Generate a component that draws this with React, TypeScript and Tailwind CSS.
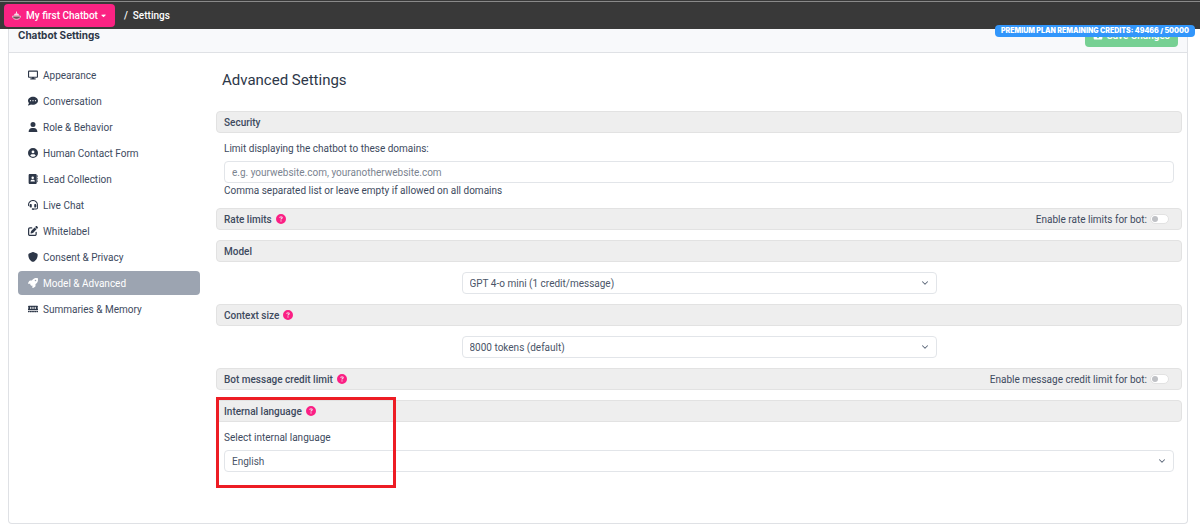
import { useState } from "react";
import type { ReactNode } from "react";
import {
  FaAddressBook,
  FaCaretDown,
  FaCircleQuestion,
  FaCircleUser,
  FaCommentDots,
  FaDisplay,
  FaFloppyDisk,
  FaHeadset,
  FaMemory,
  FaPenToSquare,
  FaRocket,
  FaShield,
  FaUser,
} from "react-icons/fa6";
import { ChevronDown } from "lucide-react";

const navItems = [
  { label: "Appearance", icon: FaDisplay },
  { label: "Conversation", icon: FaCommentDots },
  { label: "Role & Behavior", icon: FaUser },
  { label: "Human Contact Form", icon: FaCircleUser },
  { label: "Lead Collection", icon: FaAddressBook },
  { label: "Live Chat", icon: FaHeadset },
  { label: "Whitelabel", icon: FaPenToSquare },
  { label: "Consent & Privacy", icon: FaShield },
  { label: "Model & Advanced", icon: FaRocket },
  { label: "Summaries & Memory", icon: FaMemory },
];

const BotLogo = () => (
  <svg viewBox="0 0 16 16" className="size-[9px]" fill="none" aria-hidden="true">
    <path d="M8 1v4" stroke="#f6dbe4" strokeWidth="1.8" />
    <path d="M3.500 8C3.500 5.500 5.500 4 8 4S12.500 5.500 12.500 8z" fill="#f6dbe4" />
    <path d="M1 9h14c0 3.800-3 5.800-7 5.800S1 12.800 1 9z" fill="#74505c" stroke="#f6dbe4" strokeWidth="1.5" />
  </svg>
);

const SectionBar = ({ title, help, children }: { title: string; help?: boolean; children?: ReactNode }) => (
  <div className="flex h-[22px] items-center justify-between rounded border border-[#e2e2e2] bg-[#eeeeee] pl-[7px] pr-3">
    <h3 className="flex items-center gap-1 font-medium text-[#3d4a5e]">
      {title}
      {help && (
        <button type="button" aria-label={`About ${title}`}>
          <FaCircleQuestion className="size-[10px] text-[#fb1f84]" />
        </button>
      )}
    </h3>
    {children}
  </div>
);

const Toggle = ({ label }: { label: string }) => {
  const [on, setOn] = useState(false);
  return (
    <label className="flex items-center gap-[3px]">
      {label}
      <input
        type="checkbox"
        role="switch"
        checked={on}
        onChange={() => setOn(!on)}
        className="flex h-[10px] w-[19px] appearance-none items-center rounded-full border border-[#e2e2e2] bg-white px-px before:size-[6px] before:rounded-full before:bg-[#bfc1c5] checked:justify-end checked:bg-[#fb1f84]"
      />
    </label>
  );
};

const SelectBox = ({ id, label, options }: { id: string; label?: string; options: string[] }) => (
  <div className="relative">
    <select
      id={id}
      aria-label={label}
      className="block h-[22px] w-full appearance-none rounded border border-[#e2e5e9] bg-white pl-[7px] pr-6 text-[#4a5568]"
    >
      {options.map((option) => (
        <option key={option}>{option}</option>
      ))}
    </select>
    <ChevronDown className="pointer-events-none absolute right-[7px] top-[6px] size-[10px] text-[#5a6678]" strokeWidth={2.5} />
  </div>
);

const App = () => {
  const [active, setActive] = useState("Model & Advanced");

  return (
    <div className="bg-white pb-[2px] font-['Roboto',sans-serif] text-[10px] leading-[15px] text-[#3d4a5e]">
      <div className="h-px bg-[#393939]" />
      <nav className="relative z-10 flex h-7 items-center border-t border-[#8a8a8a] bg-[#393939] pl-1 font-medium text-white">
        <button type="button" className="flex h-[23px] items-center gap-[5px] rounded bg-[#fb2383] px-2">
          <BotLogo />
          <span className="flex items-center gap-[2px]">
            My first Chatbot
            <FaCaretDown className="h-[7px] w-auto" />
          </span>
        </button>
        <span className="ml-[9px]">/</span>
        <a href="#settings" className="ml-[5px]">Settings</a>
        <div className="absolute right-[5px] top-[23px] rounded bg-[#3296fb] px-[6px] font-['Inter',sans-serif] text-[7px] font-black leading-[12px]">
          PREMIUM PLAN REMAINING CREDITS: 49466 / 50000
        </div>
      </nav>

      <main className="-mt-[7px] ml-2 mr-3 rounded-b border border-t-0 border-[#dfe1e5]">
        <header className="flex h-[31px] items-center justify-between border-b border-[#dfe1e5] bg-[#f8f9fb] px-[9px] pb-1">
          <h1 className="font-['Inter',sans-serif] font-bold text-[#2d3748]">Chatbot Settings</h1>
          <button type="button" className="flex h-[23px] items-center gap-1 rounded bg-[#76d093] px-2 font-medium text-white">
            <FaFloppyDisk className="size-[10px]" />
            Save Changes
          </button>
        </header>

        <div className="flex gap-4 pb-[51px] pl-[9px] pr-[5px] pt-[9px]">
          <nav className="mt-px flex w-[182px] shrink-0 flex-col gap-[2px]">
            {navItems.map(({ label, icon: Icon }) => (
              <button
                key={label}
                type="button"
                onClick={() => setActive(label)}
                className={`flex h-6 items-center gap-[5px] rounded px-[10px] ${
                  active === label ? "bg-[#9ca4b1] text-white" : "text-[#3d4a5e]"
                }`}
              >
                <Icon className={`h-[10px] w-auto ${active === label ? "text-white" : "text-[#2d3748]"}`} />
                {label}
              </button>
            ))}
          </nav>

          <section className="flex min-w-0 flex-1 flex-col gap-[10px]">
            <h2 className="mb-[11px] mt-2 px-[6px] text-[15px] leading-[20px] text-[#2d3748]">Advanced Settings</h2>

            <div>
              <SectionBar title="Security" />
              <div className="px-2 pt-2">
                <label htmlFor="domains" className="mb-[5px] block">
                  Limit displaying the chatbot to these domains:
                </label>
                <input
                  id="domains"
                  type="text"
                  placeholder="e.g. yourwebsite.com, youranotherwebsite.com"
                  className="block h-[22px] w-full rounded border border-[#e2e5e9] px-[7px] placeholder:text-[#7b8490]"
                />
                <p>Comma separated list or leave empty if allowed on all domains</p>
              </div>
            </div>

            <SectionBar title="Rate limits" help>
              <Toggle label="Enable rate limits for bot:" />
            </SectionBar>

            <SectionBar title="Model" />
            <div className="px-2">
              <div className="mx-auto w-1/2">
                <SelectBox id="model" label="Model" options={["GPT 4-o mini (1 credit/message)"]} />
              </div>
            </div>

            <SectionBar title="Context size" help />
            <div className="px-2">
              <div className="mx-auto w-1/2">
                <SelectBox id="context" label="Context size" options={["8000 tokens (default)"]} />
              </div>
            </div>

            <SectionBar title="Bot message credit limit" help>
              <Toggle label="Enable message credit limit for bot:" />
            </SectionBar>

            <div className="relative">
              <SectionBar title="Internal language" help />
              <div className="px-2 pt-2">
                <label htmlFor="language" className="mb-[5px] block">
                  Select internal language
                </label>
                <SelectBox id="language" options={["English"]} />
              </div>
              <div className="pointer-events-none absolute -bottom-4 -top-[3px] left-0 w-[180px] border-3 border-[#ed1c24]" />
            </div>
          </section>
        </div>
      </main>
    </div>
  );
};

export default App;
